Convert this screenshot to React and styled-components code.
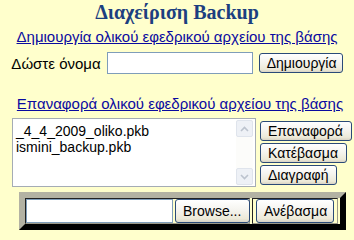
import styled, { createGlobalStyle } from "styled-components";

const GlobalStyle = createGlobalStyle`
  html, body {
    margin: 0;
    padding: 0;
    background: #ffffcc;
  }
  body {
    font-family: "Liberation Sans", Arial, sans-serif;
  }
`;

const Page = styled.div`
  width: 354px;
  height: 235px;
  display: flex;
  flex-direction: column;
  align-items: center;
  overflow: hidden;
`;

const Title = styled.h1`
  margin: 1px 0 0;
  font-family: "Liberation Serif", "Times New Roman", serif;
  font-size: 20px;
  line-height: 23px;
  font-weight: bold;
  color: #1c3f80;
`;

const SectionLink = styled.a`
  display: block;
  margin-top: ${(p) => p.$top}px;
  font-size: 15px;
  line-height: 18px;
  color: #0a0aa0;
  text-decoration: underline;
  cursor: pointer;
  padding-left: ${(p) => p.$shift || 0}px;
`;

const NameRow = styled.div`
  display: flex;
  align-items: center;
  gap: 6px;
  margin-top: 6px;
  height: 22px;
`;

const Label = styled.span`
  font-size: 15px;
  color: #000;
`;

const TextInput = styled.input`
  box-sizing: border-box;
  width: ${(p) => p.$w}px;
  height: ${(p) => p.$h || 22}px;
  border: 1px solid #7f9db9;
  background: #fff;
  margin: 0;
  padding: 0 3px;
`;

const XpButton = styled.button`
  box-sizing: border-box;
  height: ${(p) => p.$h || 20}px;
  width: ${(p) => (p.$w ? `${p.$w}px` : "auto")};
  padding: 0 8px 0 7px;
  margin: 0;
  border: 1px solid #2a4a78;
  border-radius: 3px;
  background: linear-gradient(#ffffff 0%, #f5f4ef 45%, #ece9d8 85%, #d8d3c4 100%);
  font-family: "Liberation Sans", Tahoma, sans-serif;
  font-size: 14px;
  color: #000;
  white-space: nowrap;
`;

const RestoreArea = styled.div`
  align-self: flex-start;
  display: flex;
  align-items: center;
  gap: 4px;
  margin: 5px 0 0 12px;
`;

const ListBox = styled.div`
  box-sizing: border-box;
  width: 244px;
  height: 69px;
  border: 1px solid #a5acb5;
  background: #fff;
  display: flex;
`;

const Options = styled.div`
  flex: 1;
  padding: 4px 0 0 3px;
  font-size: 14px;
  line-height: 16px;
  color: #000;
`;

const ScrollTrack = styled.div`
  width: 17px;
  margin: 1px 2px 1px 0;
  background: #fcfcfa;
  display: flex;
  flex-direction: column;
  justify-content: space-between;
`;

const ArrowBox = styled.div`
  box-sizing: border-box;
  width: 17px;
  height: 17px;
  border: 1px solid #dfe4ec;
  border-radius: 2px;
  background: #eef1f6;
  display: flex;
  align-items: center;
  justify-content: center;
`;

const ActionColumn = styled.div`
  display: flex;
  flex-direction: column;
  align-items: flex-start;
  gap: 2px;
`;

const UploadTable = styled.div`
  align-self: flex-start;
  box-sizing: border-box;
  margin: 5px 0 0 19px;
  width: 327px;
  height: 38px;
  border-style: solid;
  border-width: 6px;
  border-color: #b3b2a3 #000 #000 #b3b2a3;
  display: flex;
  gap: 2px;
  padding: 0;
`;

const Cell = styled.div`
  box-sizing: border-box;
  width: ${(p) => p.$w}px;
  border: 1px solid;
  border-color: #222 #9a9888 #9a9888 #222;
  display: flex;
  align-items: center;
  justify-content: ${(p) => (p.$center ? "center" : "flex-start")};
  gap: 2px;
`;

const Caret = ({ down }) => (
  <svg width="9" height="6" viewBox="0 0 9 6">
    <path
      d={down ? "M1 1 L4.5 4.5 L8 1" : "M1 5 L4.5 1.5 L8 5"}
      fill="none"
      stroke="#bcc3ce"
      strokeWidth="1.6"
    />
  </svg>
);

const files = ["_4_4_2009_oliko.pkb", "ismini_backup.pkb"];

const App = () => {
  return (
    <>
      <GlobalStyle />
      <Page>
        <Title>Διαχείριση Backup</Title>
        <SectionLink $top={4}>Δημιουργία ολικού εφεδρικού αρχείου της βάσης</SectionLink>
        <NameRow>
          <Label>Δώστε όνομα</Label>
          <TextInput $w={146} />
          <XpButton $w={84}>Δημιουργία</XpButton>
        </NameRow>
        <SectionLink $top={21} $shift={6}>
          Επαναφορά ολικού εφεδρικού αρχείου της βάσης
        </SectionLink>
        <RestoreArea>
          <ListBox>
            <Options>
              {files.map((f) => (
                <div key={f}>{f}</div>
              ))}
            </Options>
            <ScrollTrack>
              <ArrowBox>
                <Caret />
              </ArrowBox>
              <ArrowBox>
                <Caret down />
              </ArrowBox>
            </ScrollTrack>
          </ListBox>
          <ActionColumn>
            <XpButton>Επαναφορά</XpButton>
            <XpButton>Κατέβασμα</XpButton>
            <XpButton>Διαγραφή</XpButton>
          </ActionColumn>
        </RestoreArea>
        <UploadTable>
          <Cell $w={225}>
            <TextInput $w={147} $h={24} />
            <XpButton $w={75} $h={24}>
              Browse...
            </XpButton>
          </Cell>
          <Cell $w={86} $center>
            <XpButton $w={78} $h={24}>
              Ανέβασμα
            </XpButton>
          </Cell>
        </UploadTable>
      </Page>
    </>
  );
};

export default App;
